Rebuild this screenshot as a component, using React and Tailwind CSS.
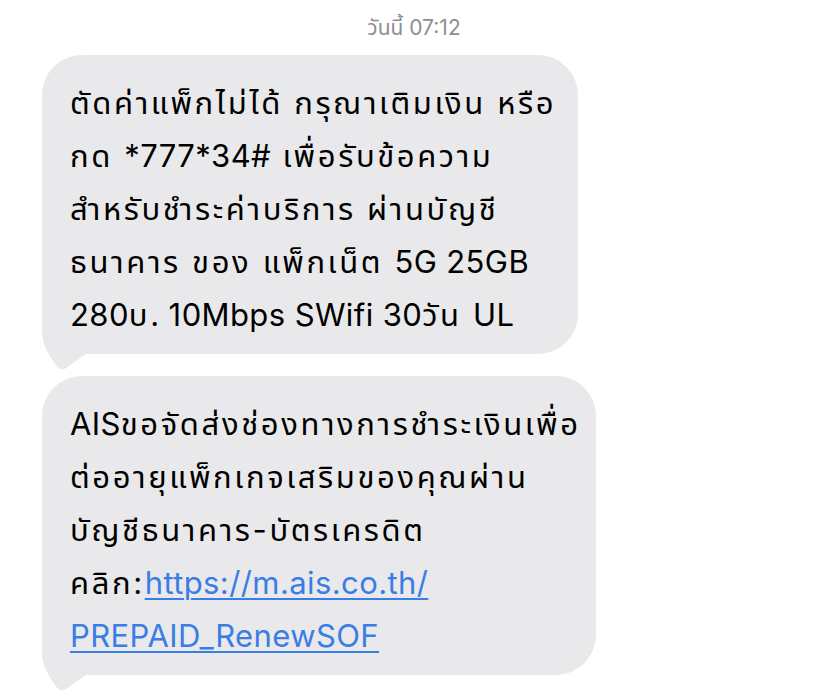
import React from "react";

const font = {
  fontFamily: '"Inter", "Noto Sans Thai", "Noto Sans", "DejaVu Sans", sans-serif',
};

// latin runs get tighter tracking than thai text
function L({ children, className = "" }) {
  return <span className={`tracking-[0.4px] ${className}`}>{children}</span>;
}

function Tail() {
  return (
    <svg
      className="absolute left-0 bottom-[-18px]"
      width="46"
      height="60"
      viewBox="0 0 46 60"
      aria-hidden="true"
    >
      <path
        d="M0 0 L0 20 C0 32 7 44 14 53 C16 57 20 59 24 56 C30 52 36 47 44 42 L44 0 Z"
        fill="#e9e9eb"
      />
    </svg>
  );
}

function Bubble({ width, children }) {
  return (
    <div className={`relative ${width}`}>
      <div className="relative z-10 rounded-[40px] bg-[#e9e9eb] pl-[28px] pr-4 pt-[21px] pb-[13px] text-[31px] leading-[53px] tracking-[2.6px] text-black">
        {children}
      </div>
      <Tail />
    </div>
  );
}

export default function App() {
  const link = "text-[#3a7de6] underline decoration-[2px] underline-offset-[4px]";
  return (
    <div className="w-[828px] h-[696px] bg-white overflow-hidden" style={font}>
      <div className="pt-[14px] text-center text-[21px] leading-[28px] text-[#8e8e93]">
        วันนี้ 07:12
      </div>
      <div className="ml-[42px] mt-[13px] flex flex-col gap-[22px]">
        <Bubble width="w-[536px]">
          <div className="whitespace-nowrap">ตัดค่าแพ็กไม่ได้ กรุณาเติมเงิน หรือ</div>
          <div className="whitespace-nowrap">
            กด <L>*777*34#</L> เพื่อรับข้อความ
          </div>
          <div className="whitespace-nowrap">สำหรับชำระค่าบริการ ผ่านบัญชี</div>
          <div className="whitespace-nowrap">
            ธนาคาร ของ แพ็กเน็ต <L>5G 25GB</L>
          </div>
          <div className="whitespace-nowrap">
            <L>280</L>บ<L>. 10Mbps SWifi 30</L>วัน <L>UL</L>
          </div>
        </Bubble>
        <Bubble width="w-[554px]">
          <div className="whitespace-nowrap">
            <L>AIS</L>ขอจัดส่งช่องทางการชำระเงินเพื่อ
          </div>
          <div className="whitespace-nowrap">ต่ออายุแพ็กเกจเสริมของคุณผ่าน</div>
          <div className="whitespace-nowrap">บัญชีธนาคาร-บัตรเครดิต</div>
          <div className="whitespace-nowrap">
            คลิก:<L className={link}>https://m.ais.co.th/</L>
          </div>
          <div className="whitespace-nowrap">
            <L className={link}>PREPAID_RenewSOF</L>
          </div>
        </Bubble>
      </div>
    </div>
  );
}
